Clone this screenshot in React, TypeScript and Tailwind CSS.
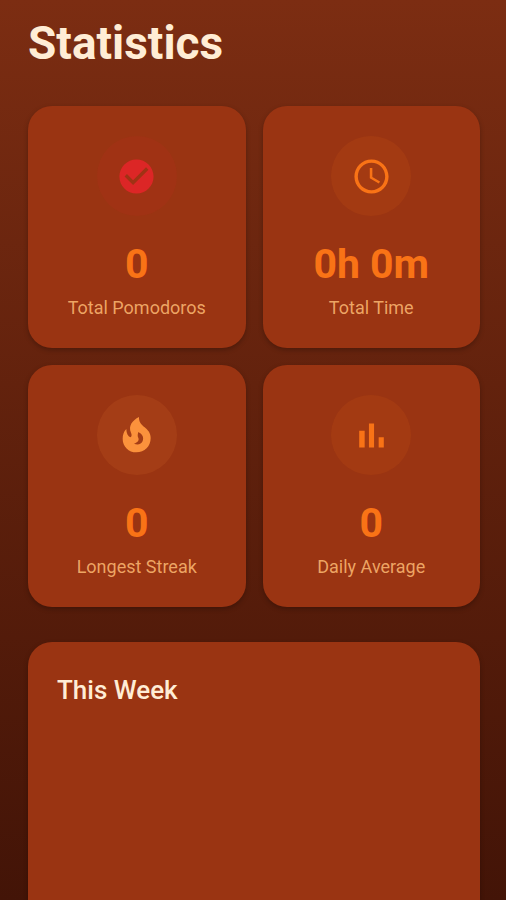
import type { ReactNode } from "react";
import { MdAccessTime, MdCheckCircle } from "react-icons/md";

function BarsIcon() {
  return (
    <svg viewBox="0 0 24 24" fill="currentColor" className="size-[41px]" aria-hidden="true">
      <path d="M4.8 9.2h3.2V19H4.8zM10.5 5h3v14h-3zm5.7 8h3v6h-3z" />
    </svg>
  );
}

function FlameIcon() {
  return (
    <svg viewBox="0 -3 144 144" fill="currentColor" className="size-12" aria-hidden="true">
      <path
        fillRule="evenodd"
        d="M78 15C58 25 45 42 54 62C57 69 56 74 52 76C45 73 40 64 40 51C32 58 29 70 29 80C29 104 47 121 70 121C95 121 113 103 113 78C113 62 104 54 95 46C84 37 77 28 78 15ZM76 60C89 67 93 76 89 87C85 97 74 100 63 95C74 91 79 85 76 78C73 72 74 67 76 60Z"
      />
    </svg>
  );
}

type Stat = { label: string; value: string; icon: ReactNode; tone: string };

const stats: Stat[] = [
  {
    label: "Total Pomodoros",
    value: "0",
    icon: <MdCheckCircle className="size-[41px]" />,
    tone: "text-[#dc2626] bg-[#dc2626]/10",
  },
  {
    label: "Total Time",
    value: "0h 0m",
    icon: <MdAccessTime className="size-[41px]" />,
    tone: "text-[#f97316] bg-[#f97316]/10",
  },
  {
    label: "Longest Streak",
    value: "0",
    icon: <FlameIcon />,
    tone: "text-[#fb923c] bg-[#fb923c]/10",
  },
  {
    label: "Daily Average",
    value: "0",
    icon: <BarsIcon />,
    tone: "text-[#f97316] bg-[#f97316]/10",
  },
];

function StatCard({ label, value, icon, tone }: Stat) {
  return (
    <article className="flex flex-col items-center rounded-3xl bg-[#9a3412] px-4 pt-[30px] pb-7 shadow-[0_2px_5px_rgba(0,0,0,0.25)]">
      <div className={`flex size-20 items-center justify-center rounded-full ${tone}`}>{icon}</div>
      <p className="mt-6 text-[41px] leading-12 font-bold text-[#f97316]">{value}</p>
      <h2 className="mt-2 text-lg leading-6 text-[#fdba74]/85">{label}</h2>
    </article>
  );
}

export default function App() {
  return (
    <main className="flex min-h-screen flex-col bg-linear-to-b from-[#7c2d12] to-[#431407] pr-[26px] pl-7 pt-[15px] font-[Roboto,sans-serif]">
      <h1 className="text-[46px] leading-14 font-bold text-[#ffedd5]">Statistics</h1>
      <section className="mt-[35px] grid grid-cols-2 gap-[17px]">
        {stats.map((stat) => (
          <StatCard key={stat.label} {...stat} />
        ))}
      </section>
      <section className="mt-[35px] flex-1 rounded-t-3xl bg-[#9a3412] px-[29px] pt-8 shadow-[0_2px_5px_rgba(0,0,0,0.25)]">
        <h2 className="text-[26px] leading-8 font-medium text-[#ffedd5]">This Week</h2>
      </section>
    </main>
  );
}
